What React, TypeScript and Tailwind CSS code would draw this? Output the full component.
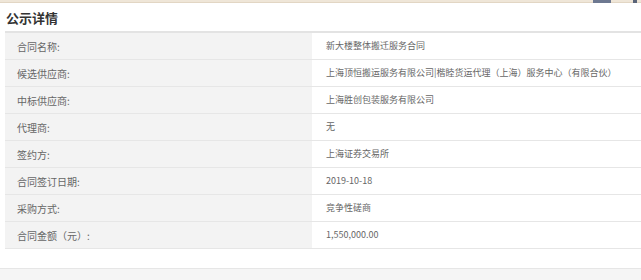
import React from "react";

const rows: [string, string][] = [
  ["合同名称:", "新大楼整体搬迁服务合同"],
  ["候选供应商:", "上海顶恒搬运服务有限公司|楷睦货运代理（上海）服务中心（有限合伙）"],
  ["中标供应商:", "上海胜创包装服务有限公司"],
  ["代理商:", "无"],
  ["签约方:", "上海证券交易所"],
  ["合同签订日期:", "2019-10-18"],
  ["采购方式:", "竞争性磋商"],
  ["合同金额（元）:", "1,550,000.00"],
];

const App: React.FC = () => {
  return (
    <div
      className="w-[641px] h-[280px] overflow-hidden bg-white flex flex-col"
      style={{ fontFamily: '"Microsoft YaHei", "Noto Sans CJK SC", "Noto Sans", sans-serif' }}
    >
      {/* top strip */}
      <div className="h-[3px] bg-[#efe6d8] border-b border-[#e2d6c4] flex shrink-0">
        <div className="ml-[593px] w-[18px] h-[3px] bg-[#6d7890]" />
        <div className="ml-[22px] w-[4px] h-[3px] bg-[#5a6478]" />
      </div>

      <h2 className="h-[28px] pl-[6px] pt-[2px] text-[13px] font-bold leading-[26px] text-[#333] shrink-0">
        公示详情
      </h2>

      <div className="ml-[5px] w-[660px] border-t-2 border-[#e3e3e3] shrink-0">
        {rows.map(([label, value]) => (
          <div key={label} className="flex h-[27px] border-b border-[#e6e6e6] text-[#666]">
            <div className="w-[307px] shrink-0 bg-[#f3f3f3] pl-[12px] flex items-center text-[10px]">{label}</div>
            <div className="flex-1 pl-[14px] flex items-center text-[9px] whitespace-nowrap">{value}</div>
          </div>
        ))}
      </div>

      <div className="mt-[19px] flex-1 bg-[#f5f5f5] border-t border-[#e6e6e6]" />
    </div>
  );
};

export default App;
